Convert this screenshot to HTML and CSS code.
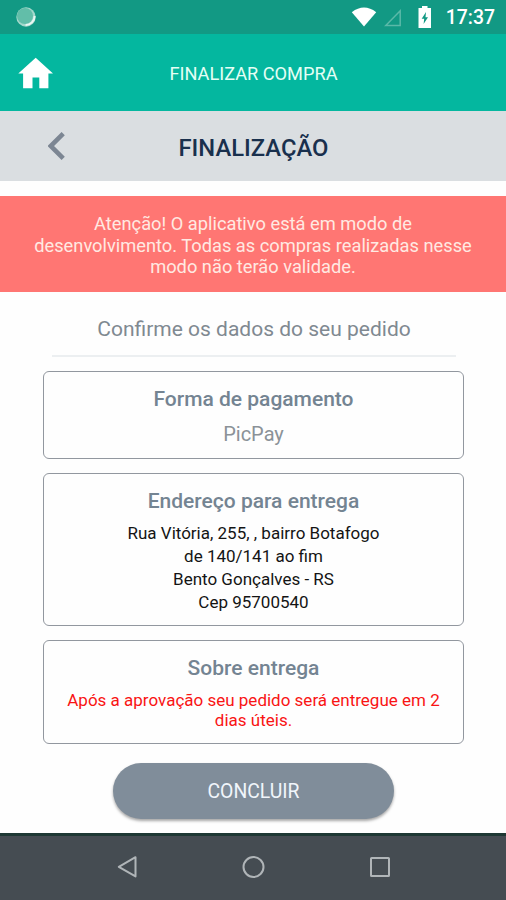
FILE: index.html
```
<!DOCTYPE html>
<html lang="pt-BR">
<head>
<meta charset="UTF-8">
<title>Finalizar compra</title>
	<link rel="stylesheet" href="styles.css">
</head>
<body>

	<div class="full">
		<div class="status">
			<svg class="sync" width="22" height="22" viewBox="0 0 22 22">
				<circle cx="11" cy="11" r="9.7" fill="#a5d8cc"/>
				<circle cx="10" cy="10" r="8" fill="#62bea9"/>
				<path d="M19.6 10a8.8 8.8 0 0 1-9 8.9" fill="none" stroke="#e9f7f3" stroke-width="2"/>
			</svg>
			<svg class="wifi" width="26" height="20" viewBox="0 0 26 20">
				<path d="M.8 5.2Q13-4 25.2 5.2L13 19.6z" fill="#fff"/>
			</svg>
			<svg class="signal" width="18" height="18" viewBox="0 0 18 18">
				<path d="M16.2 1.8v14.6H1.8z" fill="none" stroke="#5ab9a8" stroke-width="1.5"/>
			</svg>
			<svg class="battery" width="14" height="22" viewBox="0 0 14 22">
				<path d="M4 0h5.5v2H13v20H.5V2H4z" fill="#fff"/>
				<path d="M8 6L3.7 12.7h2.5L5.6 18l4.4-6.7H7.5z" fill="#129984"/>
			</svg>
			<span class="clock">17:37</span>
		</div>

		<div class="header">
			<svg class="home" width="36" height="32" viewBox="0 0 36 32">
				<path d="M17.7.7L35 16.4h-4.6v14.9h-9.1V20.5h-6.8v10.8H5.1V16.4H.3z" fill="#fff"/>
			</svg>
			<span>FINALIZAR COMPRA</span>
		</div>

		<div class="subheader">
			<svg class="back" width="18" height="28" viewBox="0 0 18 28">
				<path d="M15.2 1.7L2.7 14l12.5 12.3" fill="none" stroke="#7c8693" stroke-width="4.6"/>
			</svg>
			<h1>FINALIZAÇÃO</h1>
		</div>

		<div class="alert">
			Atenção! O aplicativo está em modo de<br>
			desenvolvimento. Todas as compras realizadas nesse<br>
			modo não terão validade.
		</div>

		<div class="content">
			<p class="confirm">Confirme os dados do seu pedido</p>
			<div class="box payment">
				<h2>Forma de pagamento</h2>
				<p>PicPay</p>
			</div>
			<div class="box address">
				<h2>Endereço para entrega</h2>
				<p>
					Rua Vitória, 255, , bairro Botafogo<br>
					de 140/141 ao fim<br>
					Bento Gonçalves - RS<br>
					Cep 95700540
				</p>
			</div>
			<div class="box delivery">
				<h2>Sobre entrega</h2>
				<p>Após a aprovação seu pedido será entregue em 2<br>dias úteis.</p>
			</div>
			<button class="finish">CONCLUIR</button>
		</div>

		<div class="navbar">
			<svg width="24" height="24" viewBox="0 0 24 24">
				<path d="M21.5 2.2v19.2L4.8 11.8z"/>
			</svg>
			<svg width="24" height="24" viewBox="0 0 24 24">
				<circle cx="12.5" cy="12" r="10"/>
			</svg>
			<svg width="24" height="24" viewBox="0 0 24 24">
				<rect x="3" y="3" width="18" height="18" rx=".6"/>
			</svg>
		</div>
	</div>

</body>
</html>
```
FILE: styles.css
```
*{
	box-sizing: border-box;
}
body{
	margin: 0;
	font-family: Roboto, "Liberation Sans", sans-serif;
	background-color: #fefefe;
}
h1, h2, p{
	margin: 0;
}
svg{
	display: block;
}
.full{
	width: 506px;
	height: 900px;
	display: flex;
	flex-direction: column;
	overflow: hidden;
}

/* status bar */
.status{
	height: 34px;
	padding: 0 11px 0 15px;
	display: flex;
	align-items: center;
	background-color: #129984;
}
.sync{
	margin-right: auto;
}
.signal{
	margin: 2px 16px 0 7px;
}
.clock{
	margin: 2px 0 0 14px;
	color: #fff;
	font-size: 19.4px;
	font-weight: 500;
	line-height: 24px;
}

/* headers */
.header{
	height: 77px;
	padding: 0 17px 0 18px;
	display: grid;
	grid-template-columns: 36px 1fr 36px;
	align-items: center;
	text-align: center;
	background-color: #04b79f;
	color: #e4fff5;
	font-size: 18.2px;
}
.header span{
	padding-top: 1px;
}
.subheader{
	height: 70px;
	padding: 0 47px 0 48px;
	display: grid;
	grid-template-columns: 18px 1fr 18px;
	align-items: center;
	text-align: center;
	background-color: #dadee1;
}
.subheader h1{
	padding-top: 3px;
	color: #19304d;
	font-size: 23.8px;
	font-weight: 500;
}

.alert{
	height: 96px;
	margin-top: 15px;
	padding-top: 17px;
	background-color: #ff7673;
	color: #ffe9e2;
	font-size: 18.27px;
	line-height: 21.6px;
	text-align: center;
}

.content{
	flex: 1;
	padding: 0 42px 0 43px;
	display: flex;
	flex-direction: column;
	text-align: center;
}
.confirm{
	height: 65px;
	margin: 0 8px 14px 9px;
	padding-top: 24px;
	border-bottom: 2px solid #eceff1;
	color: #808991;
	font-size: 21px;
	line-height: 26px;
}
.box{
	border: 1.5px solid #92979f;
	border-radius: 6px;
	color: #141414;
}
.box h2{
	color: #748492;
	font-size: 21px;
	font-weight: 500;
	line-height: 26px;
}
.payment{
	height: 88px;
	padding-top: 14px;
}
.payment p{
	padding-top: 9px;
	color: #8b9298;
	font-size: 20px;
	line-height: 26px;
}
.address{
	height: 153px;
	margin-top: 14px;
	padding-top: 14px;
}
.address p{
	padding-top: 8px;
	font-size: 17px;
	line-height: 23px;
}
.delivery{
	height: 104px;
	margin-top: 14px;
	padding-top: 14px;
}
.delivery p{
	padding-top: 10px;
	color: #f91414;
	font-size: 17px;
	line-height: 19.5px;
}
.finish{
	width: 281px;
	height: 56px;
	margin: 19px auto 0;
	padding: 0;
	border: 0;
	border-radius: 28px;
	background-color: #808d9a;
	box-shadow: 0 2px 3px rgba(0, 0, 0, .35);
	color: #f0f5fb;
	font-family: inherit;
	font-size: 19.4px;
}

/* android buttons */
.navbar{
	height: 67px;
	padding: 0 114px 2px;
	display: flex;
	align-items: center;
	justify-content: space-between;
	border-top: 3px solid #1e3834;
	background-color: #454c52;
}
.navbar svg{
	fill: none;
	stroke: #b0b5b8;
	stroke-width: 2;
	stroke-linejoin: round;
}
```
